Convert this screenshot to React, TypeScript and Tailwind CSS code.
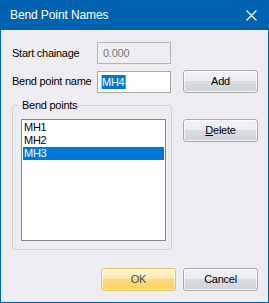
import { useState } from "react";

const btn =
  "flex items-center justify-center h-[23px] w-[75px] rounded-[3px] border border-[#acacac] text-[11px] text-black bg-[linear-gradient(#f2f4f7_0%,#eaedf1_45%,#d9dde3_50%,#cfd4db_100%)] shadow-[inset_0_0_0_1px_rgba(255,255,255,0.7)]";

export default function App() {
  const [items] = useState(["MH1", "MH2", "MH3"]);
  const [selected, setSelected] = useState(2);

  return (
    <div
      className="w-[269px] h-[303px] flex flex-col bg-[#eeeef2] border-l border-r border-b border-[#0063b1] select-none"
      style={{ fontFamily: '"Liberation Sans", Arial, sans-serif' }}
    >
      {/* title bar */}
      <div className="h-[30px] shrink-0 bg-[#0063b1] flex items-center justify-between pl-[9px] pr-[10px]">
        <span className="text-white text-[12px] tracking-[-0.1px]">Bend Point Names</span>
        <svg width="11" height="11" viewBox="0 0 11 11" className="mr-[1px]">
          <path d="M0.5 0.5 L10.5 10.5 M10.5 0.5 L0.5 10.5" stroke="#fff" strokeWidth="1.1" />
        </svg>
      </div>

      <div className="flex flex-col pl-[11px] pt-[12px] text-[11px] text-black tracking-[-0.25px]">
        <div className="flex items-center h-[22px]">
          <span className="w-[85px]">Start chainage</span>
          <div className="w-[74px] h-[22px] border border-[#b4b4b4] flex items-center pl-[5px] text-[#7a7a7a]">
            0.000
          </div>
        </div>

        <div className="flex items-center mt-[6px] h-[23px]">
          <span className="w-[85px]">Bend point name</span>
          <div className="w-[74px] h-[22px] border border-[#a9a9a9] bg-white flex items-center pl-[3px]">
            <span className="bg-[#0078d7] text-white leading-[14px] pr-[1px] border-l border-[#f5c25c]">MH4</span>
            <span className="w-px h-[14px] bg-[#e8792b]" />
          </div>
          <button className={btn + " ml-[12px]"}>Add</button>
        </div>

        <div className="flex items-start mt-[12px]">
          <div className="relative w-[160px] h-[145px] border border-[#d5d5d5] rounded-[3px]">
            <span className="absolute left-[7px] -top-[8px] px-[2px] bg-[#eeeef2] leading-[14px]">Bend points</span>
            <div className="ml-[8px] mt-[13px] w-[145px] h-[122px] border border-[#828790] bg-white p-px">
              {items.map((it, i) => (
                <div
                  key={it}
                  onClick={() => setSelected(i)}
                  className={
                    "h-[13px] leading-[13px] pl-px " +
                    (i === selected ? "bg-[#0078d7] text-white" : "text-black")
                  }
                >
                  {it}
                </div>
              ))}
            </div>
          </div>
          <button className={btn + " ml-[11px] mt-[14px]"}>
            <span>
              <span className="underline">D</span>elete
            </span>
          </button>
        </div>

        <div className="flex justify-end gap-[7px] mt-[18px] pr-[10px]">
          <button className="flex items-center justify-center h-[23px] w-[75px] rounded-[3px] border border-[#e3c36b] text-[11px] text-[#4a4a4a] bg-[linear-gradient(#fff6d6_0%,#fdeab2_45%,#fcdb7a_50%,#fdd45f_100%)] shadow-[inset_0_0_0_1px_rgba(255,255,255,0.6)]">
            OK
          </button>
          <button className={btn}>Cancel</button>
        </div>
      </div>
    </div>
  );
}
